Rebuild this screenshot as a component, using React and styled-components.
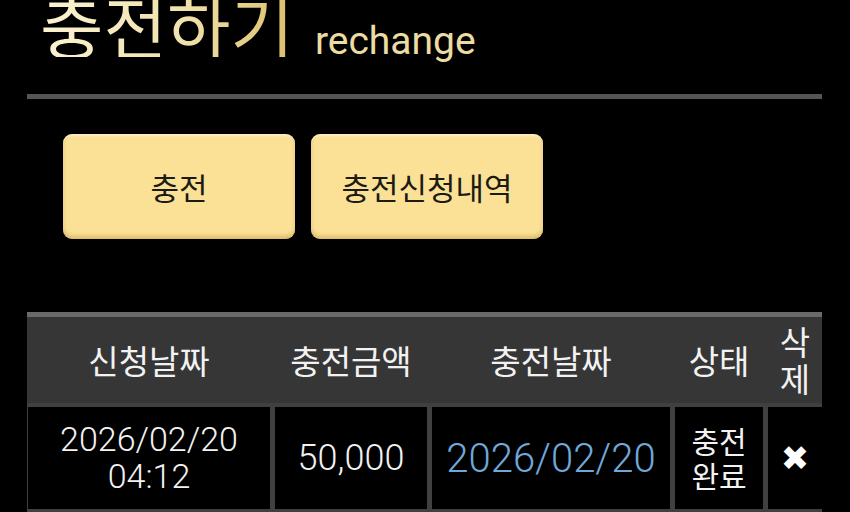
import React from "react";
import styled, { createGlobalStyle } from "styled-components";

const Global = createGlobalStyle`
  html, body { margin: 0; padding: 0; background: #000; }
  body { font-family: "Roboto", "Noto Sans CJK KR", sans-serif; }
  #root { width: 850px; height: 512px; overflow: hidden; }
`;

const Page = styled.div`
  width: 850px;
  height: 512px;
  box-sizing: border-box;
  padding: 0 28px 0 27px;
  background: #000;
  overflow: hidden;
`;

const TitleRow = styled.div`
  display: flex;
  align-items: baseline;
  gap: 21px;
  height: 58px;
  padding-left: 13px;
`;

const TitleKo = styled.h1`
  margin: -9px 0 0 0;
  font-family: "Noto Sans CJK KR", sans-serif;
  font-weight: 400;
  font-size: 69px;
  line-height: 66px;
  background: linear-gradient(90deg, #fbf3d2 0%, #f1e3ae 55%, #dcbf6c 100%);
  -webkit-background-clip: text;
  background-clip: text;
  color: transparent;
`;

const TitleEn = styled.span`
  font-family: "Roboto", sans-serif;
  font-size: 39px;
  line-height: 1;
  color: #ecdca2;
`;

const Divider = styled.div`
  height: 5px;
  background: #555;
  margin-top: 36px;
`;

const ButtonRow = styled.div`
  display: flex;
  gap: 16px;
  padding-left: 36px;
  margin-top: 35px;
`;

const ActionButton = styled.button`
  width: 232px;
  height: 105px;
  border: none;
  border-radius: 9px;
  background: #fbe196;
  box-shadow: inset 0 -3px 4px rgba(170, 130, 40, 0.4),
    inset 0 2px 2px rgba(255, 255, 255, 0.45);
  font-family: "Noto Sans CJK KR", sans-serif;
  font-size: 31px;
  font-weight: 400;
  color: #1c1a14;
  padding: 0;
`;

const Table = styled.div`
  margin-top: 73px;
  border-top: 5px solid #6a6a6a;
  background: #404040;
`;

const cols = "242px 152px 238px 88px 54px";

const HeadRow = styled.div`
  display: grid;
  grid-template-columns: ${cols};
  column-gap: 5px;
  padding-left: 1px;
  height: 86px;
  background: #363636;
`;

const HeadCell = styled.div`
  display: flex;
  align-items: center;
  justify-content: center;
  text-align: center;
  font-family: "Noto Sans CJK KR", sans-serif;
  font-size: 33px;
  line-height: 37px;
  color: #f2f2f2;
  word-break: break-all;
`;

const BodyRow = styled.div`
  display: grid;
  grid-template-columns: ${cols};
  column-gap: 5px;
  padding: 4px 0 3px 1px;
  height: 102px;
`;

const Cell = styled.div`
  display: flex;
  align-items: center;
  justify-content: center;
  text-align: center;
  background: #000;
  color: ${(p) => (p.$blue ? "#6fa9da" : "#f2f2f2")};
  font-family: ${(p) =>
    p.$ko ? '"Noto Sans CJK KR", sans-serif' : '"Roboto", "Noto Sans CJK KR", sans-serif'};
  font-weight: ${(p) => (p.$ko ? 400 : 300)};
  font-size: ${(p) => p.$size || 33}px;
  line-height: ${(p) => p.$lh || 37}px;
`;

const DeleteMark = styled.span`
  font-family: "DejaVu Sans", sans-serif;
  font-size: 34px;
  line-height: 1;
  color: #fff;
  font-weight: bold;
`;

export default function App() {
  return (
    <Page>
      <Global />
      <TitleRow>
        <TitleKo>충전하기</TitleKo>
        <TitleEn>rechange</TitleEn>
      </TitleRow>
      <Divider />
      <ButtonRow>
        <ActionButton>충전</ActionButton>
        <ActionButton>충전신청내역</ActionButton>
      </ButtonRow>
      <Table>
        <HeadRow>
          <HeadCell>신청날짜</HeadCell>
          <HeadCell>충전금액</HeadCell>
          <HeadCell>충전날짜</HeadCell>
          <HeadCell>상태</HeadCell>
          <HeadCell>삭제</HeadCell>
        </HeadRow>
        <BodyRow>
          <Cell $size={34} $lh={37}>
            2026/02/20
            <br />
            04:12
          </Cell>
          <Cell $size={36}>50,000</Cell>
          <Cell $blue $size={40}>2026/02/20</Cell>
          <Cell $ko $size={30} $lh={35}>
            충전
            <br />
            완료
          </Cell>
          <Cell>
            <DeleteMark>✖</DeleteMark>
          </Cell>
        </BodyRow>
      </Table>
    </Page>
  );
}
